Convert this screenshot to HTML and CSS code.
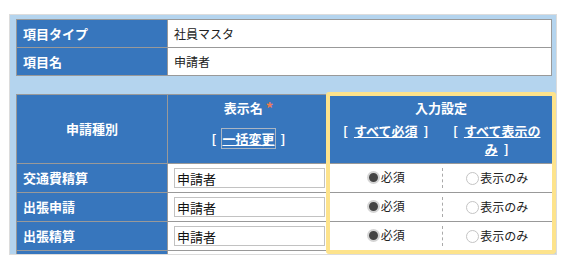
FILE: index.html
```html
<!DOCTYPE html>
<html lang="ja">
<head>
    <meta charset="UTF-8" />
    <title>項目設定</title>
    <link rel="stylesheet" href="styles.css">
</head>
<body>
    <div class="panel">
        <table class="info">
            <colgroup><col class="w-label"><col></colgroup>
            <tr><th>項目タイプ</th><td>社員マスタ</td></tr>
            <tr><th>項目名</th><td>申請者</td></tr>
        </table>

        <table class="grid">
            <colgroup>
                <col class="w-label"><col class="w-name"><col class="w-req"><col class="w-view">
            </colgroup>
            <tr class="head-top">
                <th rowspan="2">申請種別</th>
                <th rowspan="2" class="name-head">
                    <div>表示名 <span class="req">*</span></div>
                    <div class="bulk">[ <a href="#" class="focused">一括変更</a> ]</div>
                </th>
                <th colspan="2" class="set-title">入力設定</th>
            </tr>
            <tr class="head-sub">
                <th class="sub sub-l">[ <a href="#">すべて必須</a> ]</th>
                <th class="sub sub-r">[ <a href="#">すべて表示のみ</a> ]</th>
            </tr>
            <tr>
                <th class="row-label">交通費精算</th>
                <td class="name"><input type="text" value="申請者"></td>
                <td class="opt opt-l"><label><span class="radio on"></span>必須</label></td>
                <td class="opt opt-r"><div class="split"><label><span class="radio"></span>表示のみ</label></div></td>
            </tr>
            <tr>
                <th class="row-label">出張申請</th>
                <td class="name"><input type="text" value="申請者"></td>
                <td class="opt opt-l"><label><span class="radio on"></span>必須</label></td>
                <td class="opt opt-r"><div class="split"><label><span class="radio"></span>表示のみ</label></div></td>
            </tr>
            <tr>
                <th class="row-label">出張精算</th>
                <td class="name"><input type="text" value="申請者"></td>
                <td class="opt opt-l"><label><span class="radio on"></span>必須</label></td>
                <td class="opt opt-r"><div class="split"><label><span class="radio"></span>表示のみ</label></div></td>
            </tr>
            <tr>
                <th class="row-label"></th>
                <td class="name"></td>
                <td class="opt opt-l"></td>
                <td class="opt opt-r"></td>
            </tr>
        </table>

        <div class="highlight"></div>
    </div>
</body>
</html>
```

FILE: styles.css
```css
body {
    margin: 0;
    padding: 14px 0 0 9px;
    background: #ffffff;
    font-family: "Noto Sans CJK JP", "Noto Sans", sans-serif;
}

.panel {
    position: relative;
    box-sizing: border-box;
    width: 548px;
    height: 241px;
    padding: 4px 4px 0 6px;
    background: #b4d4ee;
    border: 1px solid #dcdcdc;
    overflow: hidden;
}

table {
    width: 536px;
    border-collapse: collapse;
    table-layout: fixed;
}

th,
td {
    border: 1px solid #999999;
    padding: 0 6px;
    font-size: 13px;
    line-height: 16px;
}

th {
    background: #3776bd;
    color: #ffffff;
    font-weight: bold;
}

.w-label { width: 151px; }
.w-name { width: 162px; }
.w-req { width: 112px; }
.w-view { width: 111px; }

/* top info table */
.info th {
    height: 27px;
    text-align: left;
}

.info td {
    background: #ffffff;
    color: #222;
    font-size: 12px;
}

/* grid table */
.grid {
    margin-top: 18px;
}

.grid th {
    text-align: center;
}

.head-top th {
    height: 25px;
}

.grid .name-head {
    vertical-align: top;
    padding-top: 5px;
}

.req {
    color: #ee7c52;
    font-size: 15px;
    vertical-align: -1px;
}

.bulk {
    margin-top: 15px;
}

.grid a {
    color: #ffffff;
    margin: 0 3px;
}

a.focused {
    outline: 1px solid #aab6c4;
    outline-offset: 0;
}

.set-title {
    border-bottom: none;
}

.head-sub th {
    height: 41px;
    line-height: 18px;
    vertical-align: top;
    padding-top: 2px;
}

.sub {
    border-top: none;
}

.sub-l,
.opt-l {
    border-right: none;
}

.sub-r,
.opt-r {
    border-left: none;
}

.grid .row-label {
    height: 28px;
    text-align: left;
}

.grid td {
    background: #ffffff;
}

.name input {
    box-sizing: border-box;
    width: 151px;
    height: 20px;
    border: 1px solid #c2c2c2;
    padding: 0 2px;
    font-family: inherit;
    font-size: 13px;
    color: #111;
    background: #fff;
    display: block;
}

.opt {
    padding: 0;
    text-align: center;
    font-size: 12px;
    color: #222;
}

.opt label {
    display: inline-flex;
    align-items: center;
    gap: 1px;
}

.split {
    border-left: 1px dashed #aaaaaa;
    height: 20px;
    display: flex;
    align-items: center;
    justify-content: center;
}

.radio {
    box-sizing: border-box;
    display: inline-block;
    width: 13px;
    height: 13px;
    border-radius: 50%;
    border: 1px solid #c4c4c4;
    background: #ffffff;
}

.radio.on {
    border: 2px solid #d4d4d4;
    background: #444444;
}

.highlight {
    position: absolute;
    left: 316px;
    top: 77px;
    width: 230px;
    height: 162px;
    box-sizing: border-box;
    border: 4px solid #fde38c;
    border-radius: 3px;
    pointer-events: none;
}
```
